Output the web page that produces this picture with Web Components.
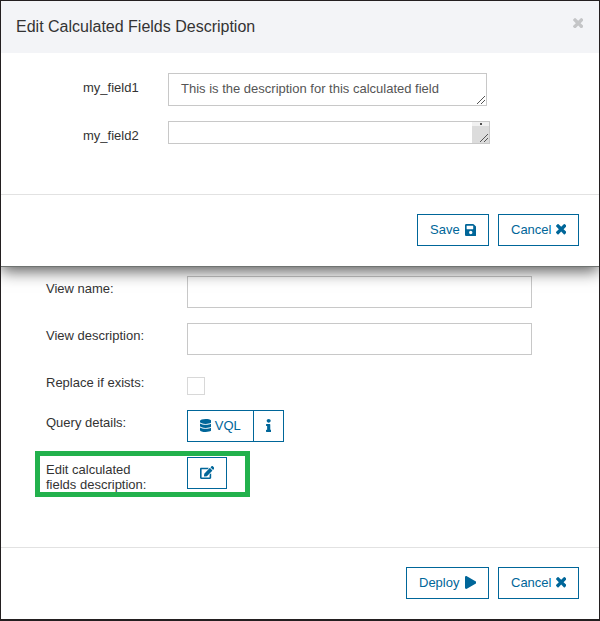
<!DOCTYPE html>
<html lang="en">
<head>
<meta charset="utf-8">
<title>Edit Calculated Fields Description</title>
<style>
html, body { margin: 0; }
body { font: 13px/15px "Liberation Sans", Arial, sans-serif; color: #333; background: #fff; }
</style>
</head>
<body>
<view-app></view-app>
<script>
const define = (name, html, setup) => customElements.define(name, class extends HTMLElement {
  connectedCallback() {
    if (this.shadowRoot) return;
    this.attachShadow({ mode: 'open' }).innerHTML = html;
    if (setup) setup(this, this.shadowRoot);
  }
});

const ICONS = {
  save: ['0 32 448 448', 11.5, 12, 'M433.941 129.941l-83.882-83.882A48 48 0 0 0 316.118 32H48C21.49 32 0 53.49 0 80v352c0 26.51 21.49 48 48 48h352c26.51 0 48-21.49 48-48V163.882a48 48 0 0 0-14.059-33.941zM224 416c-35.346 0-64-28.654-64-64 0-35.346 28.654-64 64-64s64 28.654 64 64c0 35.346-28.654 64-64 64zm96-304.52V212c0 6.627-5.373 12-12 12H76c-6.627 0-12-5.373-12-12V108c0-6.627 5.373-12 12-12h228.52c3.183 0 6.235 1.264 8.485 3.515l3.48 3.48A11.996 11.996 0 0 1 320 111.48z'],
  times: ['110 366 1188 1188', 10.4, 10.4, 'M1298 1322q0 40-28 68l-136 136q-28 28-68 28t-68-28l-294-294-294 294q-28 28-68 28t-68-28l-136-136q-28-28-28-68t28-68l294-294-294-294q-28-28-28-68t28-68l136-136q28-28 68-28t68 28l294 294 294-294q28-28 68-28t68 28l136 136q28 28 28 68t-28 68l-294 294 294 294q28 28 28 68z'],
  play: ['0 0 448 512', 11.5, 13, 'M424.4 214.7L72.4 6.6C43.8-10.3 0 6.1 0 47.9V464c0 37.5 40.7 60.1 72.4 41.3l352-208c31.4-18.5 31.5-64.1 0-82.6z'],
  database: ['0 0 448 512', 11.4, 13, 'M448 73.143v45.714C448 159.143 347.667 192 224 192S0 159.143 0 118.857V73.143C0 32.857 100.333 0 224 0s224 32.857 224 73.143zM448 176v102.857C448 319.143 347.667 352 224 352S0 319.143 0 278.857V176c48.125 33.143 136.208 48.572 224 48.572S399.874 209.143 448 176zm0 160v102.857C448 479.143 347.667 512 224 512S0 479.143 0 438.857V336c48.125 33.143 136.208 48.572 224 48.572S399.874 369.143 448 336z'],
  info: ['0 0 192 512', 5.4, 13, 'M20 424.229h20V279.771H20c-11.046 0-20-8.954-20-20V212c0-11.046 8.954-20 20-20h112c11.046 0 20 8.954 20 20v212.229h20c11.046 0 20 8.954 20 20V492c0 11.046-8.954 20-20 20H20c-11.046 0-20-8.954-20-20v-47.771c0-11.046 8.954-20 20-20zM96 0C56.235 0 24 32.235 24 72s32.235 72 72 72 72-32.235 72-72S135.764 0 96 0z'],
  edit: ['0 0 576 512', 14.4, 13, 'M402.6 83.2l90.2 90.2c3.8 3.8 3.8 10 0 13.8L274.4 405.6l-92.8 10.3c-12.4 1.4-22.9-9.1-21.5-21.5l10.3-92.8L388.8 83.2c3.8-3.8 10-3.8 13.8 0zm162-22.9l-48.8-48.8c-15.2-15.2-39.9-15.2-55.2 0l-35.4 35.4c-3.8 3.8-3.8 10 0 13.8l90.2 90.2c3.8 3.8 10 3.8 13.8 0l35.4-35.4c15.2-15.3 15.2-40 0-55.2zM384 346.2V448H64V128h229.8c3.2 0 6.2-1.3 8.5-3.5l40-40c7.6-7.6 2.2-20.5-8.5-20.5H48C21.5 64 0 85.5 0 112v352c0 26.5 21.5 48 48 48h352c26.5 0 48-21.5 48-48V306.2c0-10.7-12.9-16-20.5-8.5l-40 40c-2.2 2.3-3.5 5.3-3.5 8.5z']
};

define('ui-icon', '<style>:host{display:block;flex:none}span,svg{display:block}</style><span></span>', (el, root) => {
  const [box, w, h, d] = ICONS[el.getAttribute('name')];
  root.querySelector('span').innerHTML =
    `<svg width="${w}" height="${h}" viewBox="${box}" preserveAspectRatio="none" fill="currentColor"><path d="${d}"/></svg>`;
});

define('ui-button', `<style>
  :host { display: block; flex: none; box-sizing: border-box; height: 32px; width: var(--w); }
  button { box-sizing: border-box; width: 100%; height: 100%; margin: 0; padding: 0 0 1px 12px; border: 1px solid #006699;
    background: #fff; color: #006699; font: inherit; display: flex; align-items: center; gap: var(--gap, 5px); white-space: nowrap; }
</style><button><slot></slot></button>`);

define('text-area', `<style>
  :host { display: block; box-sizing: border-box; width: var(--w); height: var(--h); border: 1px solid #c8c8c8; background: #fff; color: #555; position: relative; }
  .text { padding: 7px 12px; }
  .bar { display: none; position: absolute; right: 0; top: 0; bottom: 0; width: 17px; background: #dcdcdc; }
  .bar::before { content: ""; display: block; height: 4px; background: #f1f1f1; }
  .bar::after { content: ""; position: absolute; left: 8px; top: 1px; width: 2px; height: 2px; background: #505050; }
  :host([scroll]) .bar { display: block; }
  svg { position: absolute; right: 1px; bottom: 1px; }
</style><div class="text"><slot></slot></div><div class="bar"></div>
<svg width="8" height="8" viewBox="0 0 8 8" shape-rendering="crispEdges"><g fill="#555"></g></svg>`, (el, root) => {
  const dots = [];
  for (let i = 0; i < 8; i++) dots.push([i, 7 - i]);
  for (let i = 0; i < 4; i++) dots.push([4 + i, 7 - i]);
  root.querySelector('g').innerHTML = dots.map(([x, y]) => `<rect x="${x}" y="${y}" width="1" height="1"/>`).join('');
});

define('form-row', `<style>
  :host { display: grid; grid-template-columns: var(--label, 141px) 1fr; height: var(--h); }
  .label { padding-top: var(--drop, 5px); white-space: nowrap; }
  .field { display: flex; align-items: flex-start; }
</style><div class="label"><slot name="label"></slot></div><div class="field"><slot></slot></div>`);

define('text-input', '<style>:host{display:block;box-sizing:border-box;width:345px;height:32px;border:1px solid #c8c8c8}</style>');
define('check-box', '<style>:host{display:block;box-sizing:border-box;width:18px;height:18px;border:1px solid #d8d8d8}</style>');

define('button-bar', `<style>
  :host { display: flex; justify-content: flex-end; gap: 9px; padding: 19px 20px 0 0; border-top: 1px solid #e2e2e2; }
</style><slot></slot>`);

define('edit-dialog', `<style>
  :host { display: flex; flex-direction: column; box-sizing: border-box; height: 265px; background: #fff; position: relative; z-index: 1; box-shadow: 0 1px 0 #6f7371, 0 5px 15px rgba(0,0,0,.66); }
  header { box-sizing: border-box; height: 52px; background: #f3f4f7; display: flex; justify-content: space-between; padding: 16px 16px 0 15px; }
  h1 { margin: 0; font-size: 16px; line-height: 20px; font-weight: 400; }
  header ui-icon { color: #c4c5c7; margin-top: 1px; }
  main { height: 141px; box-sizing: border-box; padding: 20px 0 0 82px; }
  form-row { --label: 85px; --drop: 7px; }
</style>
<header><h1>Edit Calculated Fields Description</h1><ui-icon name="times"></ui-icon></header>
<main>
  <form-row style="--h:48px"><span slot="label">my_field1</span><text-area style="--w:319px;--h:33px">This is the description for this calculated field</text-area></form-row>
  <form-row style="--h:23px"><span slot="label">my_field2</span><text-area scroll style="--w:322px;--h:23px"></text-area></form-row>
</main>
<button-bar>
  <ui-button style="--w:72px"><span>Save</span><ui-icon name="save"></ui-icon></ui-button>
  <ui-button style="--w:81px;--gap:4.6px"><span>Cancel</span><ui-icon name="times"></ui-icon></ui-button>
</button-bar>`);

define('deploy-form', `<style>
  :host { display: block; }
  main { box-sizing: border-box; height: 281px; padding: 10px 0 0 45px; }
  .mark { box-sizing: border-box; width: 215px; height: 46px; margin: -6px 0 0 -11px; padding: 1px 0 0 6px; border: 5px solid #22b14c; }
  .join { margin-left: -1px; }
</style>
<main>
  <form-row style="--h:47px"><span slot="label">View name:</span><text-input></text-input></form-row>
  <form-row style="--h:54px"><span slot="label">View description:</span><text-input></text-input></form-row>
  <form-row style="--h:33px;--drop:0"><span slot="label" style="display:block;margin-top:-2px">Replace if exists:</span><check-box></check-box></form-row>
  <form-row style="--h:47px"><span slot="label">Query details:</span>
    <ui-button style="--w:67px;--gap:3.4px"><ui-icon name="database"></ui-icon><span>VQL</span></ui-button><ui-button class="join" style="--w:31px"><ui-icon name="info"></ui-icon></ui-button></form-row>
  <div class="mark"><form-row style="--h:32px"><span slot="label">Edit calculated<br>fields description:</span>
    <ui-button style="--w:40px"><ui-icon name="edit"></ui-icon></ui-button></form-row></div>
</main>
<button-bar>
  <ui-button style="--w:83px;--gap:5.5px"><span>Deploy</span><ui-icon name="play"></ui-icon></ui-button>
  <ui-button style="--w:81px;--gap:4.6px"><span>Cancel</span><ui-icon name="times"></ui-icon></ui-button>
</button-bar>`);

define('view-app', `<style>
  :host { display: block; box-sizing: border-box; width: 600px; height: 621px; border: solid #231f20; border-width: 1px 1px 2px; overflow: hidden; }
</style><edit-dialog></edit-dialog><deploy-form></deploy-form>`);
</script>
</body>
</html>
